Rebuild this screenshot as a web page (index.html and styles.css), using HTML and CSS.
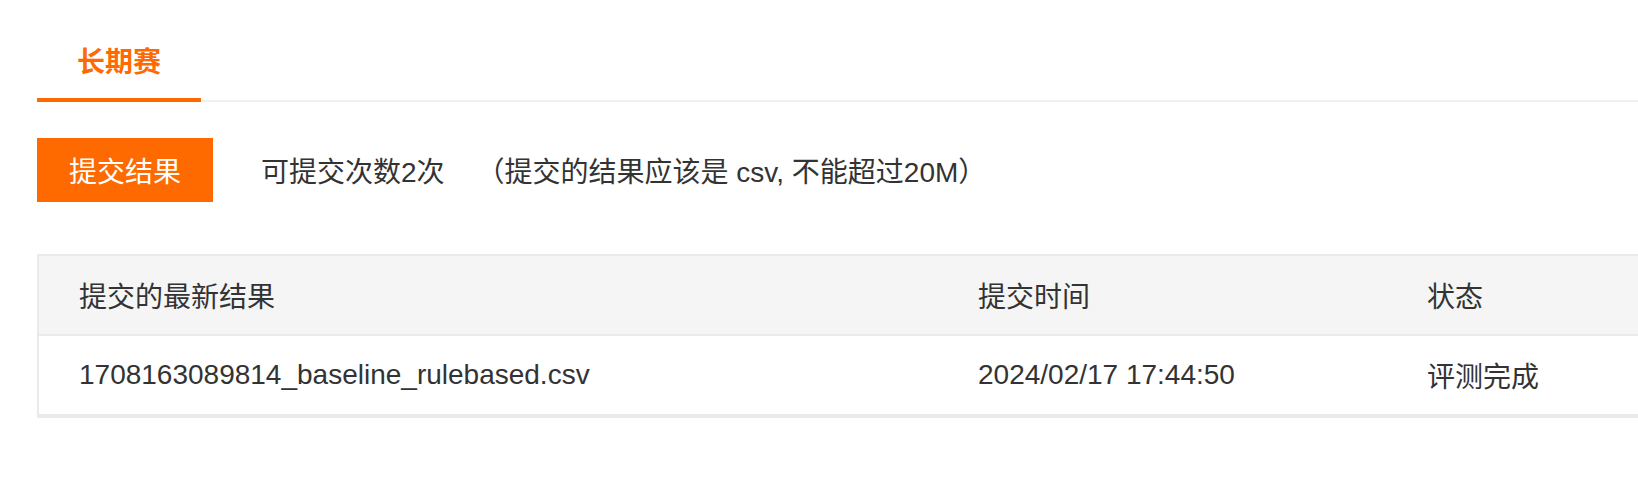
FILE: index.html
```html
<!DOCTYPE html>
<html lang="zh-CN">
<head>
<meta charset="utf-8">
<title>长期赛</title>
<link rel="stylesheet" href="styles.css">
</head>
<body>
<div class="page">
  <div class="tabs">
    <div class="tab active">长期赛</div>
  </div>
  <div class="toolbar">
    <button class="submit-btn">提交结果</button>
    <span class="count">可提交次数2次</span>
    <span class="hint">（提交的结果应该是 csv, 不能超过20M）</span>
  </div>
  <div class="table">
    <div class="row head">
      <div class="cell">提交的最新结果</div>
      <div class="cell">提交时间</div>
      <div class="cell">状态</div>
    </div>
    <div class="row body">
      <div class="cell">1708163089814_baseline_rulebased.csv</div>
      <div class="cell">2024/02/17 17:44:50</div>
      <div class="cell">评测完成</div>
    </div>
  </div>
</div>
</body>
</html>
```

FILE: styles.css
```css
html, body {
  margin: 0;
  padding: 0;
  background: #fff;
  overflow: hidden;
}
body {
  font-family: "Liberation Sans", "Noto Sans CJK SC", sans-serif;
  color: #333;
}
.page {
  padding-left: 37px;
}
.tabs {
  display: flex;
  border-bottom: 2px solid #f0f0f0;
}
.tab {
  position: relative;
  height: 80px;
  padding: 20px 40px 0;
  display: flex;
  align-items: center;
  font-size: 28px;
  font-weight: bold;
  color: #ff6a00;
}
.tab.active::after {
  content: "";
  position: absolute;
  left: 0;
  right: 0;
  bottom: -2px;
  height: 4px;
  background: #ff6a00;
}
.toolbar {
  margin-top: 36px;
  display: flex;
  align-items: center;
  font-size: 28px;
  color: #333;
}
.submit-btn {
  width: 176px;
  height: 64px;
  border: 0;
  padding: 0;
  background: #ff6a00;
  color: #fff;
  font-family: inherit;
  font-size: 28px;
}
.count {
  margin-left: 48px;
}
.hint {
  margin-left: 32px;
}
.table {
  margin-top: 52px;
  border: 2px solid #e8eaec;
  border-right: 0;
  border-bottom-width: 4px;
  font-size: 28px;
  color: #333;
}
.row {
  display: grid;
  grid-template-columns: 899px 449px 1fr;
  align-items: center;
}
.row.head {
  height: 78px;
  background: #f5f5f5;
  border-bottom: 2px solid #e8eaec;
}
.row.body {
  height: 78px;
}
.cell {
  padding-left: 40px;
}
```
